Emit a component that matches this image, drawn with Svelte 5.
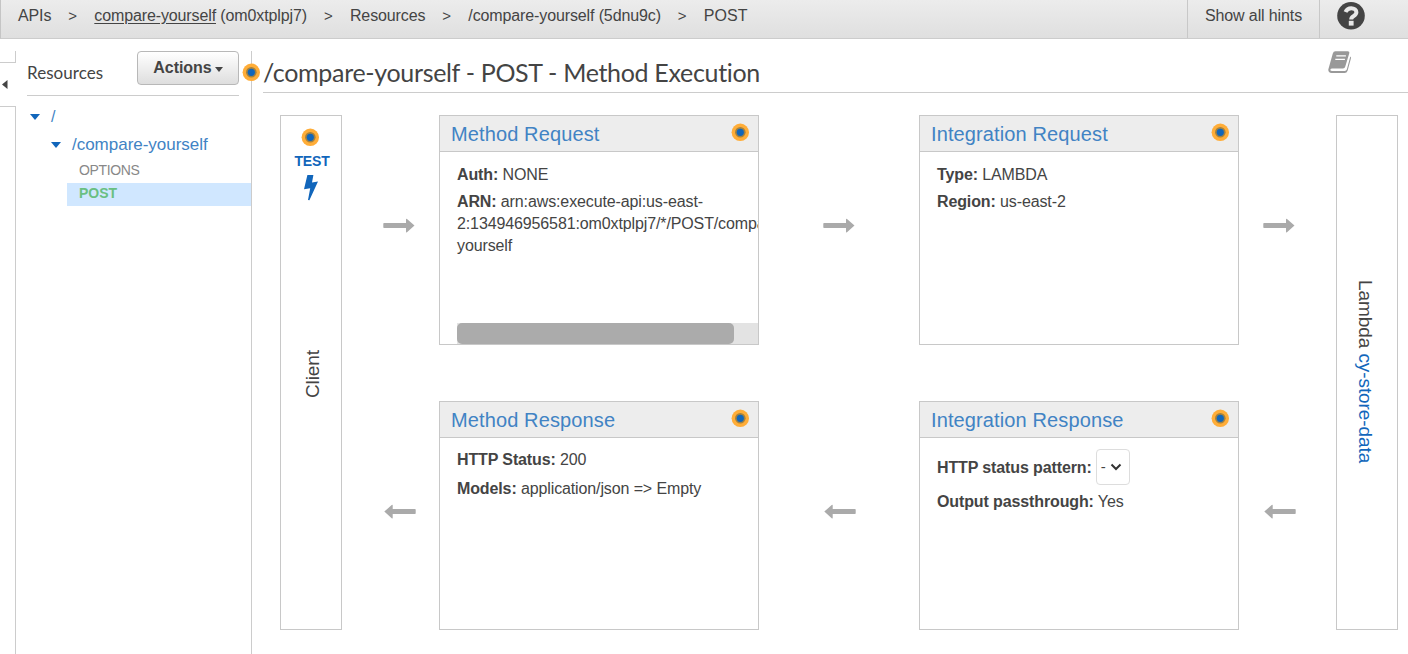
<script>
  const crumbs = ['APIs', '', 'Resources', '/compare-yourself (5dnu9c)', 'POST'];
</script>

{#snippet hint()}
  <svg class="hint" width="18" height="18" viewBox="0 0 18 18">
    <circle cx="9.3" cy="9.3" r="8.7" fill="#ffad38" />
    <circle cx="9.3" cy="9.3" r="5.3" fill="#a5823f" />
    <circle cx="9.3" cy="9.3" r="3.6" fill="#1166bb" />
  </svg>
{/snippet}

{#snippet arrow(dir, place)}
  <div class="flow {dir} {place}">
    <svg width="32" height="15" viewBox="0 -0.6 32 15">
      {#if dir === 'right'}
        <path d="M1 4.4H23V.8Q23-.2 24 .5L31.5 7 24 13.6Q23 14.2 23 13.2V9.4H1Q.3 9.4.3 8.7V5.1Q.3 4.4 1 4.4Z" fill="#aaa" />
      {:else}
        <path d="M31 4.4H8.7V.8Q8.7-.2 7.7.5L.3 7 7.7 13.6Q8.7 14.2 8.7 13.2V9.4H31Q31.7 9.4 31.7 8.7V5.1Q31.7 4.4 31 4.4Z" fill="#aaa" />
      {/if}
    </svg>
  </div>
{/snippet}

<div class="page">
  <header>
    <nav>
      {#each crumbs as crumb, i}
        {#if i > 0}<span class="sep">&gt;</span>{/if}
        {#if i === 1}
          <span><u>compare-yourself</u> (om0xtplpj7)</span>
        {:else}
          <span class:plain={crumb === 'POST'}>{crumb}</span>
        {/if}
      {/each}
    </nav>
    <div class="hints">Show all hints</div>
    <div class="help">
      <svg width="28" height="28" viewBox="0 0 28 28">
        <circle cx="14" cy="13.8" r="13.8" fill="#444" />
        <path d="M8.5 10C9.8 7.2 11.6 6.3 14.2 6.3C17.3 6.3 19.4 7.9 19.4 10.3C19.4 12.5 18 13.3 16.4 14.2C14.8 15.1 14.2 15.6 14.2 17.4" fill="none" stroke="#e8e8e8" stroke-width="4" />
        <rect x="11.8" y="18.8" width="4.8" height="4.8" fill="#e8e8e8" />
      </svg>
    </div>
  </header>

  <div class="body">
    <div class="rail">
      <div class="rail-top"></div>
      <div class="rail-toggle"><svg width="6" height="9" viewBox="0 0 6 9"><path d="M5.5 0V9L0 4.5Z" fill="#444" /></svg></div>
      <div class="rail-rest"></div>
    </div>

    <aside>
      <div class="side-head">
        <h2>Resources</h2>
        <button>Actions<i class="caret"></i></button>
      </div>
      <div class="tree">
        <div class="node root"><i class="open"></i><span>/</span></div>
        <div class="node child"><i class="open"></i><span>/compare-yourself</span></div>
        <div class="verb">OPTIONS</div>
        <div class="verb active">POST</div>
      </div>
    </aside>

    <main>
      <div class="title">
        <span class="title-hint">{@render hint()}</span>
        <h1>/compare-yourself - POST - Method Execution</h1>
        <svg class="book" width="24" height="23" viewBox="0 0 24 23">
          <path d="M7.4.3H19.6Q21.8.3 21.2 2.4L17.2 15.8Q16.7 17.5 15 17.5H4.2Q2.5 17.5 2.3 18.7Q2.2 20 4.2 20H16.8Q18.3 20 18.8 18.6L22.3 5.5Q23.4 6 22.9 7.5L19.6 19.7Q18.8 22 16.6 22H3.6Q.2 22 .3 18.6L4.8 2.4Q5.4.3 7.4.3Z" fill="#999" />
          <path d="M8.3 4.9H17.9M7.3 8.4H16.9" stroke="#fff" stroke-width="1.4" />
        </svg>
      </div>

      <div class="diagram">
        <section class="endpoint client">
          {@render hint()}
          <b class="test">TEST</b>
          <svg class="bolt" width="14" height="26" viewBox="0 0 14 26"><path d="M3.4 0H9.4L8 7.4 14 6.4 5.4 25.2 4 25 6.2 13.2 0 14.2Z" fill="#1166bb" /></svg>
          <span class="upright">Client</span>
        </section>

        {@render arrow('right', 'first')}

        <section class="card">
          <div class="card-head"><span>Method Request</span>{@render hint()}</div>
          <div class="card-body">
            <p><b>Auth:</b> NONE</p>
            <p><b>ARN:</b> arn:aws:execute-api:us-east-<br />2:134946956581:om0xtplpj7/*/POST/compare-<br />yourself</p>
            <div class="track"><div class="thumb"></div></div>
          </div>
        </section>

        {@render arrow('right', 'middle')}

        <section class="card">
          <div class="card-head"><span>Integration Request</span>{@render hint()}</div>
          <div class="card-body">
            <p><b>Type:</b> LAMBDA</p>
            <p><b>Region:</b> us-east-2</p>
          </div>
        </section>

        {@render arrow('right', 'last')}

        <section class="endpoint lambda">
          <span>Lambda <a>cy-store-data</a></span>
        </section>

        {@render arrow('left', 'first')}

        <section class="card">
          <div class="card-head"><span>Method Response</span>{@render hint()}</div>
          <div class="card-body response">
            <p><b>HTTP Status:</b> 200</p>
            <p><b>Models:</b> application/json =&gt; Empty</p>
          </div>
        </section>

        {@render arrow('left', 'middle')}

        <section class="card">
          <div class="card-head"><span>Integration Response</span>{@render hint()}</div>
          <div class="card-body pattern">
            <p class="select-row">
              <b>HTTP status pattern:</b>
              <span class="select">-<svg width="12" height="8" viewBox="0 0 12 8"><path d="M1.5 1.5L6 6L10.5 1.5" fill="none" stroke="#333" stroke-width="2" /></svg></span>
            </p>
            <p><b>Output passthrough:</b> Yes</p>
          </div>
        </section>

        {@render arrow('left', 'last')}
      </div>
    </main>
  </div>
</div>

<style>
  :global(body) { background: #fff; overflow: hidden; }
  .page { width: 1408px; height: 654px; display: flex; flex-direction: column; overflow: hidden; box-sizing: border-box; font: 16px/22px 'Liberation Sans', Arial, sans-serif; letter-spacing: -0.12px; color: #444; white-space: nowrap; }
  .page * { box-sizing: border-box; }
  svg { display: block; flex: none; }
  h1, h2, p { margin: 0; font-weight: 400; }

  header { height: 39px; flex: none; display: flex; border-left: 1px solid #c5c5c5; border-bottom: 1px solid #ccc; background: linear-gradient(#ececec, #dfdfdf); }
  nav { flex: 1; display: flex; padding: 5px 0 0 17px; }
  .plain { letter-spacing: 0; }
  .sep { margin: 0 17px; width: 9px; font-size: 15px; }
  u { text-underline-offset: 2px; }
  .hints { width: 133px; padding: 5px 0 0 17px; border-left: 1px solid #c8c8c8; border-right: 1px solid #c8c8c8; }
  .help { width: 88px; padding: 2px 0 0 17px; }

  .body { flex: 1; display: flex; padding-top: 12px; }
  .rail { width: 16px; display: flex; flex-direction: column; }
  .rail-top { height: 12px; border-right: 1px solid #ccc; border-bottom: 1px solid #ccc; }
  .rail-toggle { height: 43px; padding: 17px 0 0 2px; }
  .rail-rest { flex: 1; border-top: 1px solid #ccc; border-right: 1px solid #ccc; }

  aside { width: 236px; border-right: 1px solid #ccc; }
  .side-head { margin: 0 12px 0 11px; height: 45px; display: flex; justify-content: space-between; border-bottom: 1px solid #ccc; }
  h2 { font: 17px/22px Lato, sans-serif; letter-spacing: 0.05px; padding-top: 11px; }
  button { width: 102px; height: 34px; padding: 0 0 1px; display: flex; align-items: center; justify-content: center; gap: 3px; border: 1px solid #b8b8b8; border-radius: 4px; background: linear-gradient(#fff, #dedede); font: bold 16px/20px 'Liberation Sans', Arial, sans-serif; letter-spacing: -0.05px; color: #444; }
  .caret { border: 4.5px solid transparent; border-top: 5px solid #444; border-bottom: 0; margin-top: 3px; }
  .tree { padding-top: 8px; }
  .node { display: flex; align-items: center; color: #4183c4; }
  .open { border: 5px solid transparent; border-top: 6px solid #1166bb; border-bottom: 0; }
  .root { padding-left: 14px; gap: 11px; height: 26px; }
  .child { padding-left: 35px; gap: 11px; height: 29px; font-size: 17px; letter-spacing: -0.02px; }
  .verb { height: 24px; margin-left: 51px; padding-left: 12px; font-size: 14px; line-height: 23px; letter-spacing: -0.35px; color: #888; }
  .verb.active { height: 23px; background: #d0e7ff; color: #6abf82; font-weight: bold; line-height: 21px; letter-spacing: 0; }

  main { flex: 1; padding-left: 11px; }
  .title { height: 42px; display: flex; border-bottom: 1px solid #ccc; }
  .title-hint { width: 0; margin: 12px 21px 0 -21px; }
  h1 { font: 25px/32px Lato, sans-serif; letter-spacing: -0.32px; padding-top: 5px; flex: 1; }
  .book { margin-right: 56px; }

  .diagram { margin: 22px 0 0 17px; display: grid; grid-template-columns: 62px 97px 320px 160px 320px 97px 62px; grid-template-rows: 230px 229px; row-gap: 56px; }
  .endpoint { grid-row: 1 / 3; border: 1px solid #c8c8c8; display: flex; flex-direction: column; align-items: center; font-size: 19px; letter-spacing: -0.08px; }
  .client { grid-column: 1; padding-top: 12px; }
  .client :global(.hint) { margin-right: 2px; }
  .test { font-size: 14px; line-height: 16px; letter-spacing: -0.2px; color: #1166bb; margin: 7px 0 0 2px; }
  .bolt { margin: 6px 0 0; }
  .upright { writing-mode: vertical-rl; transform: rotate(180deg); margin: 149px 0 0 3px; }
  .lambda { grid-column: 7; padding-top: 164px; }
  .lambda span { writing-mode: vertical-rl; margin-right: 5px; }
  a { color: #1166bb; }

  .flow { padding-top: 103px; }
  .right.first { padding-left: 41px; }
  .right.middle { padding-left: 64px; }
  .right.last { padding-left: 24px; }
  .left.first { padding-left: 42px; }
  .left.middle { padding-left: 65px; }
  .left.last { padding-left: 25px; }

  .card { border: 1px solid #c8c8c8; display: flex; flex-direction: column; overflow: hidden; }
  .card-head { height: 36px; flex: none; display: flex; justify-content: space-between; padding: 7px 9px 0 11px; border-bottom: 1px solid #c8c8c8; background: #ededed; font-size: 20px; letter-spacing: 0.12px; color: #4183c4; }
  .card-body { flex: 1; padding: 12px 0 0 17px; display: flex; flex-direction: column; gap: 5px; }
  .track { margin-top: auto; height: 21px; background: #e3e3e3; }
  .thumb { width: 277px; height: 21px; border-radius: 5px; background: #ababab; }
  .response { padding-top: 11px; gap: 7px; }
  .pattern { padding-top: 11px; gap: 5px; }
  .select-row { display: flex; align-items: center; gap: 4px; height: 36px; }
  .select-row b { padding-top: 2px; }
  .pattern p:last-child { padding-top: 1px; }
  .select { width: 34px; height: 36px; border: 1px solid #ddd; border-radius: 4px; display: flex; align-items: center; gap: 4px; padding-left: 4px; font-size: 15px; }
</style>
